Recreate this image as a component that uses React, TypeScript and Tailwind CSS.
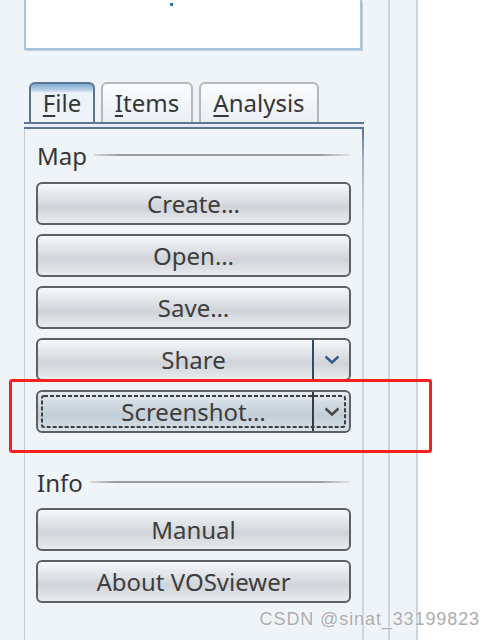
import React from 'react';

const btnBase =
  'h-[43px] rounded-[6px] border-2 border-[#5e6064] text-[24px] leading-[28px] text-[#3d3d3d]';
const btnGray = 'bg-[linear-gradient(to_bottom,#f7f8f9,#e3e6e9_30%,#d0d4d9_60%,#e9ebed)]';
const btnBlue = 'bg-[linear-gradient(to_bottom,#e6ebf0,#d2dbe3_30%,#c2ced8_60%,#d9e1e8)]';

function Chevron({ color }: { color: string }) {
  return (
    <svg width="16" height="9" viewBox="0 0 16 9" fill="none">
      <path d="M1.5 1.5 L8 7.5 L14.5 1.5" stroke={color} strokeWidth="2.4" />
    </svg>
  );
}

function PlainButton({ label }: { label: string }) {
  return <div className={`${btnBase} ${btnGray} flex items-center justify-center`}>{label}</div>;
}

function SplitButton({ label, focused }: { label: string; focused?: boolean }) {
  return (
    <div className={`${btnBase} ${focused ? btnBlue : btnGray} relative flex`}>
      <div className="flex-1 flex items-center justify-center pl-[37px]">{label}</div>
      <div className={`w-[2px] ${focused ? 'bg-[#3a3b3d]' : 'bg-[#2c4b6c]'}`} />
      <div className="w-[35px] flex items-center justify-center">
        <Chevron color={focused ? '#454545' : '#2f5b86'} />
      </div>
      {focused && (
        <svg className="absolute left-[3px] top-[3px]" width="305" height="33">
          <rect
            x="1"
            y="1"
            width="303"
            height="31"
            rx="2"
            fill="none"
            stroke="#3e3e3e"
            strokeWidth="2"
            strokeDasharray="4 2"
          />
        </svg>
      )}
    </div>
  );
}

function GroupLabel({ label }: { label: string }) {
  return (
    <div className="h-[28px] flex items-center pl-[1px] pr-[1px]">
      <span className="text-[24px] leading-[28px] text-[#363636]">{label}</span>
      <div className="flex-1 ml-[7px] mt-[-2px] h-[2px] bg-[linear-gradient(to_right,#d6dadf,#9c9c9c_10%,#9c9c9c_88%,#e2e6ea)]" />
    </div>
  );
}

function Tab({ first, rest, width, selected }: { first: string; rest: string; width: string; selected?: boolean }) {
  return (
    <div
      className={`${width} h-[40px] rounded-t-[6px] border-2 border-b-0 flex items-end justify-center pb-[5px] text-[24px] leading-[28px] text-[#363636] ${
        selected
          ? 'border-[#5b7594] bg-[linear-gradient(to_bottom,#80aad2,#b7d0e7_6px,#eef3f8_9px)]'
          : 'border-[#b4b8bc] bg-[linear-gradient(to_bottom,#fbfcfd,#eaeff4)]'
      }`}
    >
      <span>
        <span className="underline decoration-[2px] underline-offset-[3px]">{first}</span>
        {rest}
      </span>
    </div>
  );
}

export default function App() {
  return (
    <div className="w-[494px] h-[640px] overflow-hidden bg-white relative flex font-['Noto_Sans',sans-serif]">
      <div className="w-[418px] h-full bg-[#eff4f9] border-r-2 border-[#c9d6e1] flex">
        <div className="w-[390px] h-full border-r-2 border-[#c9d6e1] pl-[24px] flex flex-col">
          <div className="relative w-[338px] h-[50px] shrink-0 bg-white border-2 border-t-0 border-[#a6c6de] shadow-[1px_1px_0_#c3ccd6]">
            <div className="absolute left-[144px] top-[3px] w-[3px] h-[3px] bg-[#1f7bc0]" />
          </div>

          <div className="mt-[32px] flex gap-[6px] pl-[5px]">
            <Tab first="F" rest="ile" width="w-[66px]" selected />
            <Tab first="I" rest="tems" width="w-[92px]" />
            <Tab first="A" rest="nalysis" width="w-[120px]" />
          </div>

          <div className="w-[340px] h-[7px] shrink-0 border-y-2 border-[#5b7594] bg-[#e6edf4]" />

          <div className="w-[340px] flex-1 flex">
            <div className="w-[1px] bg-[#c4ced8]" />
            <div className="flex-1 flex flex-col px-[11px] pt-[13px]">
              <GroupLabel label="Map" />
              <div className="mt-[12px] flex flex-col gap-[9px]">
                <PlainButton label="Create…" />
                <PlainButton label="Open…" />
                <PlainButton label="Save…" />
                <SplitButton label="Share" />
                <SplitButton label="Screenshot…" focused />
              </div>
              <div className="mt-[36px]">
                <GroupLabel label="Info" />
              </div>
              <div className="mt-[11px] flex flex-col gap-[9px]">
                <PlainButton label="Manual" />
                <PlainButton label="About VOSviewer" />
              </div>
            </div>
            <div className="w-[2px] bg-[linear-gradient(to_bottom,#5b7594,#9fb4c8_30px,#c9d8e5_90px)]" />
          </div>
        </div>
      </div>

      <div className="absolute left-[9px] top-[379px] w-[423px] h-[74px] border-[3px] border-[#f52121] rounded-[3px]" />

      <div className="absolute right-[14px] top-[608px] font-['Liberation_Sans',sans-serif] text-[18px] leading-[22px] tracking-[0.9px] text-[#adadad] [text-shadow:0_0_2px_#ffffff]">
        CSDN @sinat_33199823
      </div>
    </div>
  );
}
